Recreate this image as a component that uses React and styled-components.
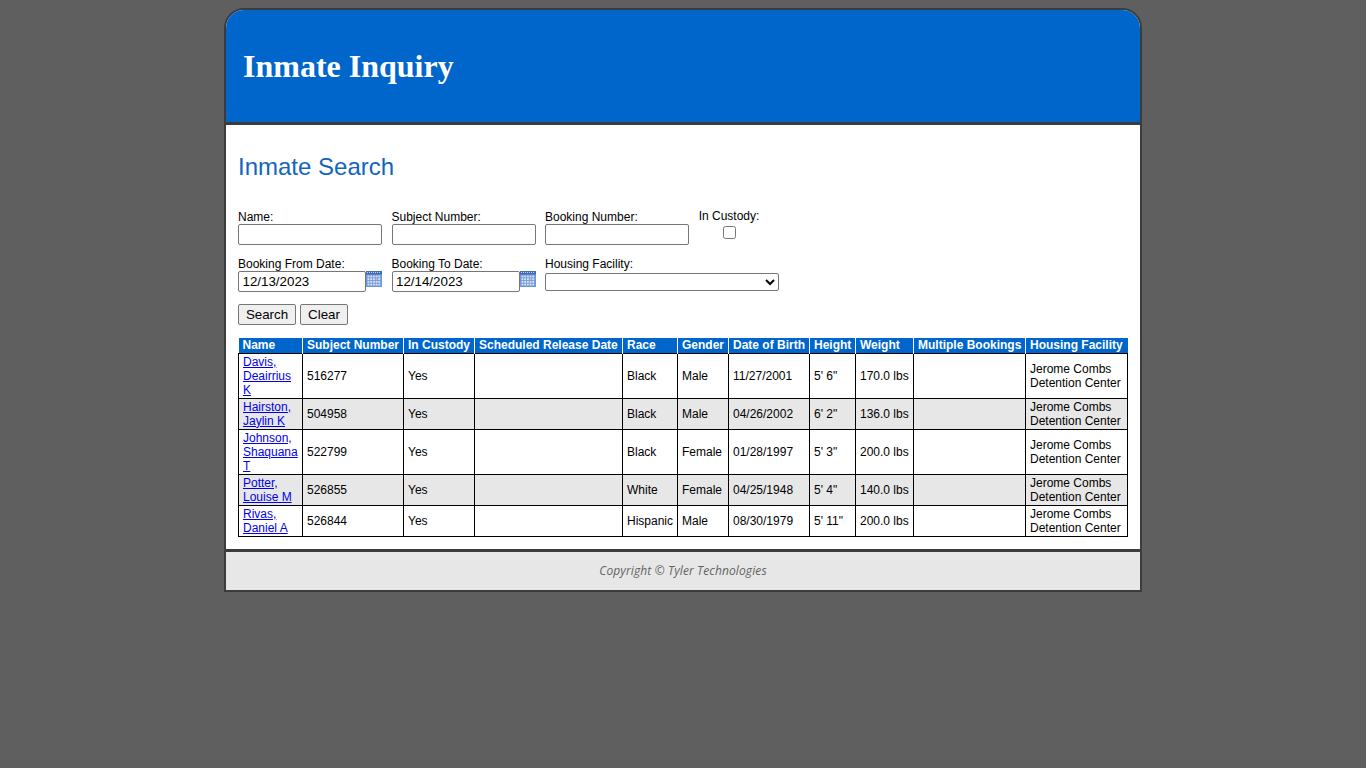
import React from "react";
import styled, { createGlobalStyle } from "styled-components";

const GlobalStyle = createGlobalStyle`
  html, body {
    margin: 0;
    padding: 0;
    min-height: 768px;
    background: #5f5f5f;
    font-family: "Liberation Sans", Arial, sans-serif;
    font-size: 12px;
    color: #000;
  }
`;

const Page = styled.div`
  width: 918px;
  margin: 8px auto 0;
  box-sizing: border-box;
  border: 2px solid #3c3c3c;
  border-radius: 20px 20px 0 0;
  background: #fff;
  overflow: hidden;
`;

const Banner = styled.header`
  height: 112px;
  background: #0066cc;
  border-bottom: 3px solid #3c3c3c;
  display: flex;
  align-items: center;
  padding-left: 17px;
`;

const BannerTitle = styled.h1`
  margin: 0;
  font-family: "Liberation Serif", "Times New Roman", serif;
  font-size: 32px;
  font-weight: bold;
  color: #fff;
`;

const Content = styled.main`
  padding: 28px 12px 12px;
`;

const PageTitle = styled.h2`
  margin: 0 0 30px;
  font-size: 24px;
  line-height: 27px;
  font-weight: normal;
  color: #1464bd;
`;

const FormRow = styled.div`
  display: flex;
  align-items: flex-start;
  margin-bottom: ${(p) => p.$gap}px;
`;

const Field = styled.div`
  width: ${(p) => p.$width}px;
  flex: none;
`;

const Label = styled.label`
  display: block;
  line-height: 14px;
`;

const TextBox = styled.input`
  display: block;
  box-sizing: border-box;
  width: ${(p) => p.$width}px;
  height: 21px;
  margin: 0;
  padding: 1px 3px 1px 3.5px;
  border: 1px solid #767676;
  border-radius: 2px;
  background: #fff;
  font-family: "Liberation Sans", Arial, sans-serif;
  font-size: 13.33px;
  color: #000;
`;

const DateWrap = styled.div`
  display: flex;
  align-items: flex-start;
`;

const CustodyField = styled(Field)`
  margin-top: -1px;
  text-align: center;
`;

const Check = styled.input`
  display: block;
  width: 13px;
  height: 13px;
  margin: 3px auto 0 24px;
`;

const Facility = styled.select`
  display: block;
  box-sizing: border-box;
  width: 234px;
  height: 18px;
  margin-top: 2px;
  border: 1px solid #767676;
  border-radius: 2px;
  background: #fff;
  font-family: "Liberation Sans", Arial, sans-serif;
  font-size: 12px;
`;

const Buttons = styled.div`
  display: flex;
  gap: 4px;
  margin-bottom: 13px;
`;

const Button = styled.button`
  box-sizing: border-box;
  height: 21px;
  width: ${(p) => p.$width}px;
  padding: 0;
  border: 1px solid #767676;
  border-radius: 2px;
  background: #efefef;
  font-family: "Liberation Sans", Arial, sans-serif;
  font-size: 13.33px;
  color: #000;
`;

const Results = styled.table`
  width: 890px;
  table-layout: fixed;
  border-collapse: collapse;
  font-size: 12px;
  line-height: 14px;
`;

const HeadCell = styled.th`
  box-sizing: border-box;
  height: 15px;
  padding: 0 0 0 4px;
  background: #0066cc;
  border-left: 1px solid #fff;
  border-right: 1px solid #fff;
  color: #fff;
  font-weight: bold;
  text-align: left;
  white-space: nowrap;
  &:first-child { border-left: 0; }
  &:last-child { border-right: 0; }
`;

const Row = styled.tr`
  background: ${(p) => (p.$alt ? "#e7e7e7" : "#fff")};
`;

const Cell = styled.td`
  padding: 1px 4px;
  border: 1px solid #000;
  vertical-align: middle;
`;

const NameLink = styled.a`
  color: #0000ee;
  text-decoration: underline;
`;

const Footer = styled.footer`
  height: 38px;
  border-top: 3px solid #3c3c3c;
  background: #e7e7e7;
  display: flex;
  align-items: center;
  justify-content: center;
  font-family: "Open Sans", "Noto Sans", sans-serif;
  font-size: 12px;
  letter-spacing: 0.12px;
  font-style: italic;
  color: #636363;
`;

function CalendarIcon() {
  const cells = [];
  for (let r = 0; r < 4; r++) {
    for (let c = 0; c < 5; c++) {
      cells.push(
        <rect
          key={`${r}-${c}`}
          x={1.5 + c * 2.7}
          y={4.5 + r * 2.7}
          width="1.9"
          height="1.9"
          fill={r === 1 && c === 3 ? "#e0b8a8" : "#d5e2f5"}
        />
      );
    }
  }
  return (
    <svg width="16" height="16" viewBox="0 0 16 16" style={{ flex: "none" }}>
      <rect x="0" y="0" width="16" height="16" fill="#6f97d8" />
      <rect x="0" y="0" width="16" height="3.5" fill="#3f6db8" />
      <path d="M1 1.5h14" stroke="#c4d4ee" strokeDasharray="1 1" />
      {cells}
    </svg>
  );
}

const columns = [
  ["Name", 64],
  ["Subject Number", 101],
  ["In Custody", 71],
  ["Scheduled Release Date", 148],
  ["Race", 55],
  ["Gender", 51],
  ["Date of Birth", 81],
  ["Height", 46],
  ["Weight", 58],
  ["Multiple Bookings", 112],
  ["Housing Facility", 102],
];

const inmates = [
  ["Davis, Deairrius K", "516277", "Black", "Male", "11/27/2001", "5' 6\"", "170.0 lbs"],
  ["Hairston, Jaylin K", "504958", "Black", "Male", "04/26/2002", "6' 2\"", "136.0 lbs"],
  ["Johnson, Shaquana T", "522799", "Black", "Female", "01/28/1997", "5' 3\"", "200.0 lbs"],
  ["Potter, Louise M", "526855", "White", "Female", "04/25/1948", "5' 4\"", "140.0 lbs"],
  ["Rivas, Daniel A", "526844", "Hispanic", "Male", "08/30/1979", "5' 11\"", "200.0 lbs"],
];

export default function App() {
  return (
    <>
      <GlobalStyle />
      <Page>
        <Banner>
          <BannerTitle>Inmate Inquiry</BannerTitle>
        </Banner>
        <Content>
          <PageTitle>Inmate Search</PageTitle>
          <FormRow $gap={12}>
            <Field $width={153.5}>
              <Label>Name:</Label>
              <TextBox $width={144} />
            </Field>
            <Field $width={153.5}>
              <Label>Subject Number:</Label>
              <TextBox $width={144} />
            </Field>
            <Field $width={153.5}>
              <Label>Booking Number:</Label>
              <TextBox $width={144} />
            </Field>
            <CustodyField $width={61}>
              <Label>In Custody:</Label>
              <Check type="checkbox" />
            </CustodyField>
          </FormRow>
          <FormRow $gap={12}>
            <Field $width={153.5}>
              <Label>Booking From Date:</Label>
              <DateWrap>
                <TextBox $width={128} defaultValue="12/13/2023" />
                <CalendarIcon />
              </DateWrap>
            </Field>
            <Field $width={153.5}>
              <Label>Booking To Date:</Label>
              <DateWrap>
                <TextBox $width={128} defaultValue="12/14/2023" />
                <CalendarIcon />
              </DateWrap>
            </Field>
            <Field $width={234}>
              <Label>Housing Facility:</Label>
              <Facility />
            </Field>
          </FormRow>
          <Buttons>
            <Button $width={58}>Search</Button>
            <Button $width={48}>Clear</Button>
          </Buttons>
          <Results>
            <colgroup>
              {columns.map(([name, width]) => (
                <col key={name} style={{ width }} />
              ))}
            </colgroup>
            <thead>
              <tr>
                {columns.map(([name]) => (
                  <HeadCell key={name}>{name}</HeadCell>
                ))}
              </tr>
            </thead>
            <tbody>
              {inmates.map((m, i) => (
                <Row key={m[1]} $alt={i % 2 === 1}>
                  <Cell>
                    <NameLink href="#">{m[0]}</NameLink>
                  </Cell>
                  <Cell>{m[1]}</Cell>
                  <Cell>Yes</Cell>
                  <Cell />
                  <Cell>{m[2]}</Cell>
                  <Cell>{m[3]}</Cell>
                  <Cell>{m[4]}</Cell>
                  <Cell>{m[5]}</Cell>
                  <Cell>{m[6]}</Cell>
                  <Cell />
                  <Cell>Jerome Combs Detention Center</Cell>
                </Row>
              ))}
            </tbody>
          </Results>
        </Content>
        <Footer>Copyright © Tyler Technologies</Footer>
      </Page>
    </>
  );
}
